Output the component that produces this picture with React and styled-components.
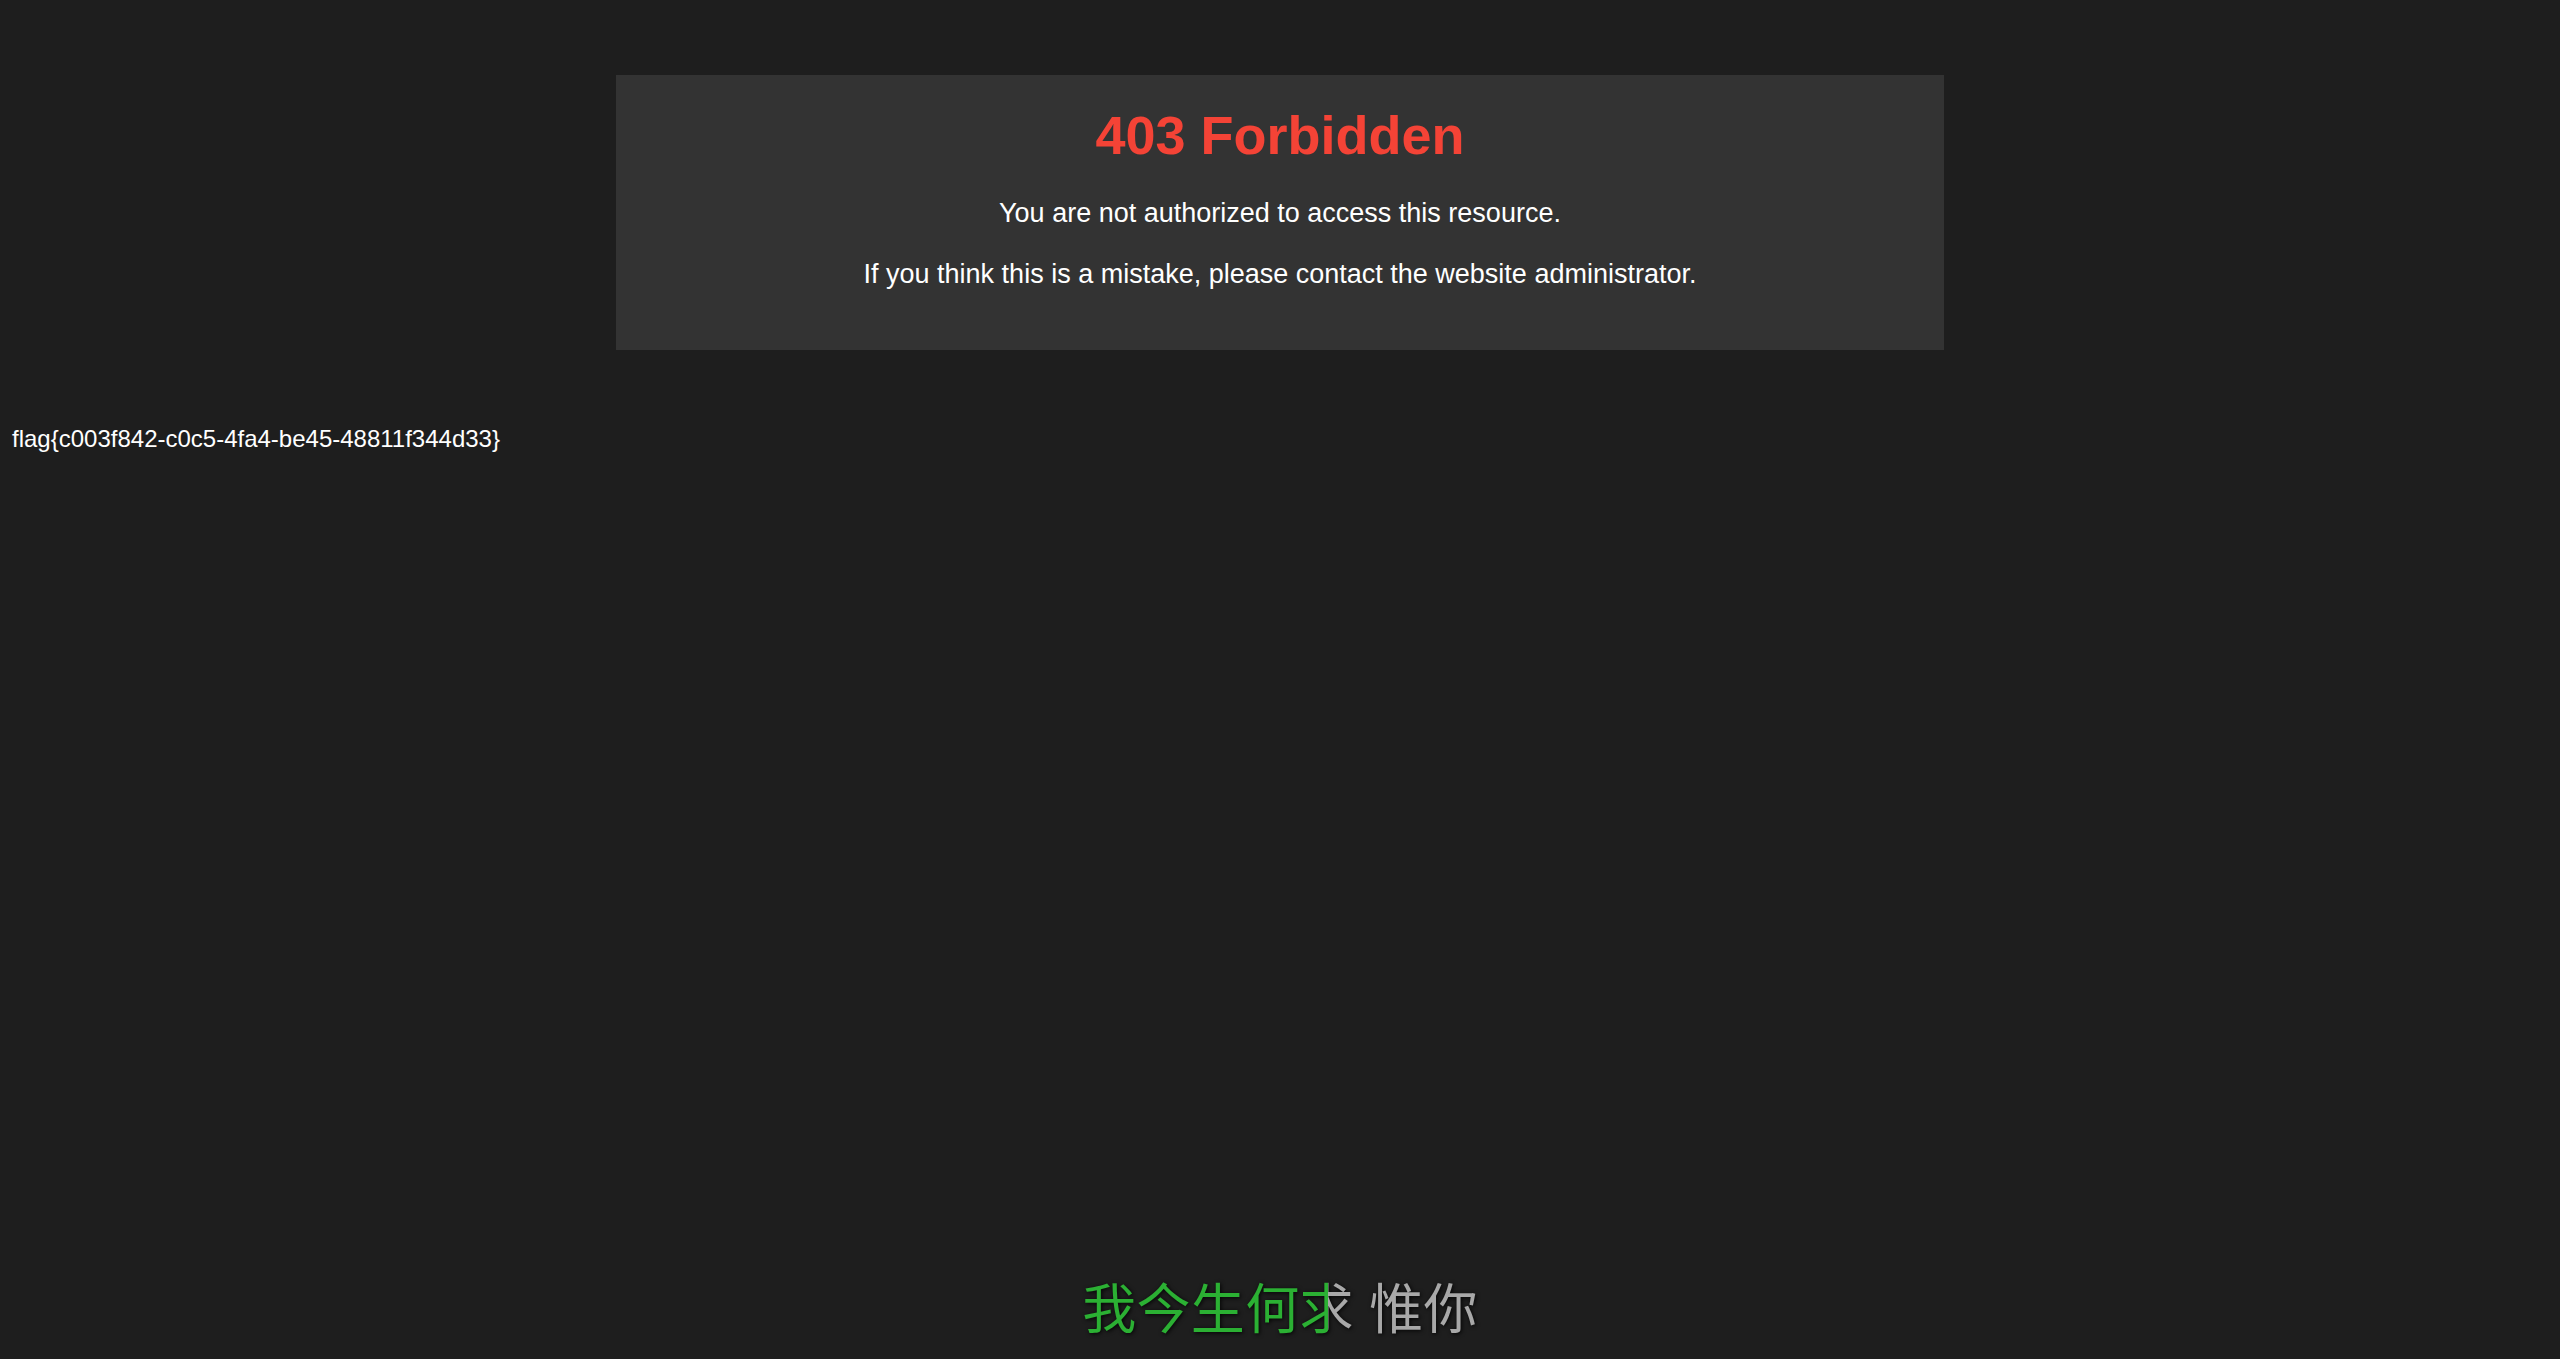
import React from 'react'
import styled, { createGlobalStyle } from 'styled-components'

const GlobalStyle = createGlobalStyle`
html, body {
  background: #1e1e1e;
}
body {
  margin: 0;
  color: #fff;
  font-family: "Liberation Sans", Arial, sans-serif;
  font-size: 24px;
}
`

const Page = styled.div`
padding: 0 12px;
overflow: hidden;
`

const Container = styled.div`
width: 50%;
margin: 75px auto;
padding: 29px 30px 30px;
background: #333;
text-align: center;
`

const Title = styled.h1`
margin: 0 0 32px;
color: #f44336;
font-size: 54px;
font-weight: bold;
`

const Message = styled.p`
margin: 30px 0;
font-size: 27px;
color: #fff;
`

const Flag = styled.div`
font-size: 24px;
color: #fff;
`

const Lyric = styled.div`
position: fixed;
left: 50%;
bottom: 14px;
transform: translateX(-50%);
filter: drop-shadow(1px 1px 2px rgba(0, 0, 0, 0.9));
`

const LyricText = styled.span`
display: inline-block;
font-family: "Noto Sans CJK SC", "Noto Sans", sans-serif;
font-size: 54px;
letter-spacing: 0.3px;
word-spacing: 3px;
white-space: nowrap;
color: transparent;
-webkit-background-clip: text;
background-clip: text;
`

const lyric = '我今生何求 惟你'

export default function App() {
  const progress = 62

  return (
    <Page>
      <GlobalStyle />
      <Container>
        <Title>403 Forbidden</Title>
        <Message>You are not authorized to access this resource.</Message>
        <Message>If you think this is a mistake, please contact the website administrator.</Message>
      </Container>
      <Flag>flag{'{'}c003f842-c0c5-4fa4-be45-48811f344d33{'}'}</Flag>
      <Lyric>
        <LyricText
          style={{ backgroundImage: `linear-gradient(90deg, #2bb033 ${progress}%, #a8a8a8 ${progress}%)` }}
        >
          {lyric}
        </LyricText>
      </Lyric>
    </Page>
  )
}
